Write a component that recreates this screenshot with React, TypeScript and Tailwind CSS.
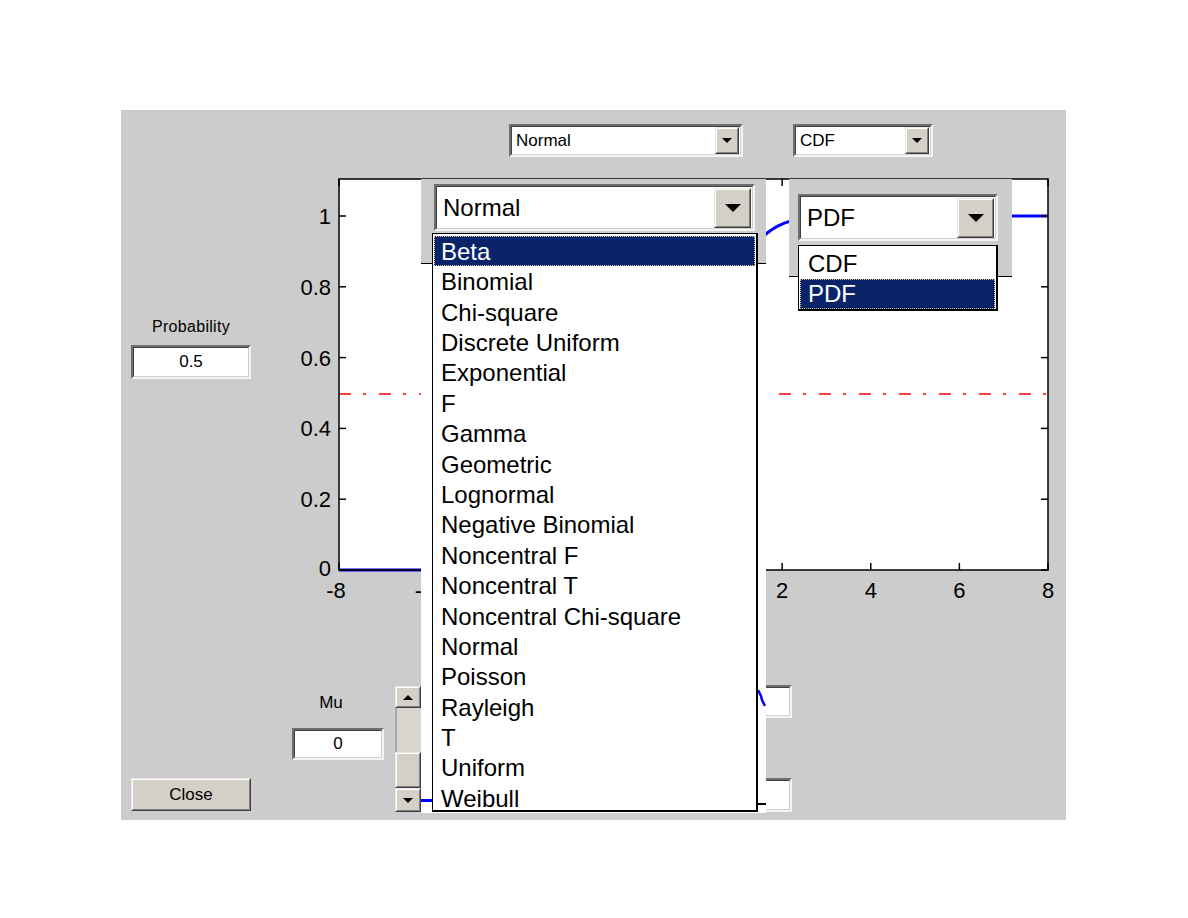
import React from "react";

const FONT = "font-['Liberation_Sans',Arial,sans-serif]";

const DISTRIBUTIONS = [
  "Beta",
  "Binomial",
  "Chi-square",
  "Discrete Uniform",
  "Exponential",
  "F",
  "Gamma",
  "Geometric",
  "Lognormal",
  "Negative Binomial",
  "Noncentral F",
  "Noncentral T",
  "Noncentral Chi-square",
  "Normal",
  "Poisson",
  "Rayleigh",
  "T",
  "Uniform",
  "Weibull",
];

// plot geometry, in page pixels
const AX = { left: 339, right: 1048, top: 179, bottom: 570 };
const xPx = (v: number) => AX.left + ((v + 8) / 16) * (AX.right - AX.left);
const yPx = (v: number) => AX.bottom - v * 354;

const erf = (x: number) => {
  const s = x < 0 ? -1 : 1;
  const a = Math.abs(x);
  const t = 1 / (1 + 0.3275911 * a);
  const y =
    1 -
    ((((1.061405429 * t - 1.453152027) * t + 1.421413741) * t - 0.284496736) * t + 0.254829592) *
      t *
      Math.exp(-a * a);
  return s * y;
};
const normCdf = (x: number) => 0.5 * (1 + erf(x / Math.SQRT2));

const Raised: React.FC<{ className?: string; children?: React.ReactNode }> = ({ className = "", children }) => (
  <div className={`border border-t-[#e8e6e0] border-l-[#e8e6e0] border-b-[#404040] border-r-[#404040] bg-[#d4d0c8] ${className}`}>
    <div className="flex h-full w-full items-center justify-center border border-t-white border-l-white border-b-[#808080] border-r-[#808080]">
      {children}
    </div>
  </div>
);

const Sunken: React.FC<{ className?: string; children?: React.ReactNode }> = ({ className = "", children }) => (
  <div className={`border-2 border-t-[#6e6e6e] border-l-[#6e6e6e] border-b-[#f4f4f4] border-r-[#f4f4f4] ${className}`}>
    <div className="flex h-full w-full items-center border border-t-[#404040] border-l-[#404040] border-b-[#d4d0c8] border-r-[#d4d0c8] bg-white">
      {children}
    </div>
  </div>
);

const SmallTriangle = () => (
  <div className="h-0 w-0 border-l-[5px] border-r-[5px] border-t-[5px] border-l-transparent border-r-transparent border-t-black" />
);

const SmallTriangleUp = () => (
  <div className="h-0 w-0 border-l-[5px] border-r-[5px] border-b-[5px] border-l-transparent border-r-transparent border-b-black" />
);

const BigTriangle = () => (
  <div className="h-0 w-0 border-l-[8px] border-r-[8px] border-t-[8px] border-l-transparent border-r-transparent border-t-black" />
);

const Combo: React.FC<{ label: string; className: string; big?: boolean }> = ({ label, className, big }) => (
  <Sunken className={className}>
    <span className={`flex-1 ${big ? "pl-[6px] text-[24px]" : "pl-[4px] text-[17px]"} text-black`}>{label}</span>
    <Raised className={big ? "mr-[1px] h-[40px] w-[37px]" : "mr-[1px] h-[27px] w-[24px]"}>
      {big ? <BigTriangle /> : <SmallTriangle />}
    </Raised>
  </Sunken>
);

const EditBox: React.FC<{ value?: string; className: string }> = ({ value, className }) => (
  <Sunken className={className}>
    <span className="flex-1 text-center text-[17px] text-black">{value}</span>
  </Sunken>
);

const PlotArea = () => {
  const curve: string[] = [];
  for (let i = 0; i <= 320; i++) {
    const v = -8 + (i / 320) * 16;
    curve.push(`${xPx(v).toFixed(1)},${yPx(normCdf(v)).toFixed(1)}`);
  }
  const yTicks = [0, 0.2, 0.4, 0.6, 0.8, 1];
  const xTicks = [-8, -6, -4, -2, 0, 2, 4, 6, 8];
  // labels -4, -2 and 0 sit fully under the enlarged list, so they are not drawn
  const xLabels = [-8, -6, 2, 4, 6, 8];
  return (
    <svg width={785} height={440} viewBox="281 170 785 440" className="block">
      <rect x={AX.left} y={AX.top} width={AX.right - AX.left} height={AX.bottom - AX.top} fill="#ffffff" />
      <line x1={AX.left} y1={394} x2={AX.right} y2={394} stroke="#ff0000" strokeWidth={1.6} strokeDasharray="12 12 3 13" />
      <polyline points={curve.join(" ")} fill="none" stroke="#0000ff" strokeWidth={3} />
      <rect
        x={AX.left}
        y={AX.top}
        width={AX.right - AX.left}
        height={AX.bottom - AX.top}
        fill="none"
        stroke="#000000"
        strokeWidth={1.5}
      />
      {yTicks.map((v) => (
        <g key={v}>
          <line x1={AX.left} y1={yPx(v)} x2={AX.left + 7} y2={yPx(v)} stroke="#000" strokeWidth={1.5} />
          <line x1={AX.right - 7} y1={yPx(v)} x2={AX.right} y2={yPx(v)} stroke="#000" strokeWidth={1.5} />
          <text
            x={331}
            y={yPx(v) + (v === 0 ? 6 : 8)}
            textAnchor="end"
            fontFamily="Liberation Sans, Arial, sans-serif"
            fontSize={22}
            fill="#000"
          >
            {v.toString()}
          </text>
        </g>
      ))}
      {xTicks.map((v) => (
        <g key={v}>
          <line x1={xPx(v)} y1={AX.bottom} x2={xPx(v)} y2={AX.bottom - 7} stroke="#000" strokeWidth={1.5} />
          <line x1={xPx(v)} y1={AX.top} x2={xPx(v)} y2={AX.top + 7} stroke="#000" strokeWidth={1.5} />
        </g>
      ))}
      {xLabels.map((v) => (
        <text
          key={v}
          x={xPx(v) - (v < 0 ? 3 : 0)}
          y={598}
          textAnchor="middle"
          fontFamily="Liberation Sans, Arial, sans-serif"
          fontSize={22}
          fill="#000"
        >
          {v}
        </text>
      ))}
    </svg>
  );
};

const Slider = () => (
  <div className="ml-[11px] mt-[76px] flex h-[126px] w-[26px] flex-col">
    <Raised className="h-[22px] w-full">
      <SmallTriangleUp />
    </Raised>
    <div className="h-[44px] w-full border-l-2 border-l-[#a8a8a8] bg-[#d8d5cf]" />
    <Raised className="h-[36px] w-full" />
    <Raised className="h-[24px] w-full">
      <SmallTriangle />
    </Raised>
  </div>
);

const DistributionList = () => (
  <div className="absolute left-[11px] top-[54px] h-[579px] w-[326px] border border-black border-r-2 border-b-2 bg-white px-[1px] pt-[2px]">
    {DISTRIBUTIONS.map((name, i) =>
      i === 0 ? (
        <div
          key={name}
          className="flex h-[30px] items-center border border-dotted border-[#d8c890] bg-[#0a246a] pl-[6px] pt-[2px] text-[24px] text-white"
        >
          {name}
        </div>
      ) : (
        <div key={name} className="flex h-[30.4px] items-center pl-[7px] pt-[2px] text-[24px] text-black">
          {name}
        </div>
      )
    )}
  </div>
);

const TypeList = () => (
  <div className="absolute left-[9px] top-[66px] h-[66px] w-[200px] border border-black border-r-2 border-b-2 bg-white px-[1px] pt-[2px]">
    <div className="flex h-[31px] items-center pl-[8px] text-[24px] text-black">CDF</div>
    <div className="flex h-[30px] items-center border border-dotted border-[#d8c890] bg-[#0a246a] pl-[7px] text-[24px] text-white">
      PDF
    </div>
  </div>
);

export default function App() {
  return (
    <div className={`h-[918px] w-[1188px] bg-white pl-[121px] pt-[110px] ${FONT}`}>
      <div className="relative flex h-[710px] w-[945px] flex-col overflow-hidden bg-[#cccccc]">
        {/* top selectors */}
        <div className="flex h-[60px] gap-[50px] pl-[388px] pt-[14px]">
          <Combo label="Normal" className="h-[33px] w-[234px]" />
          <Combo label="CDF" className="h-[33px] w-[140px]" />
        </div>

        {/* probability + plot */}
        <div className="flex h-[440px]">
          <div className="w-[160px] pl-[10px] pt-[147px]">
            <div className="w-[120px] text-center text-[16px] leading-[20px] tracking-[0.3px] text-black">Probability</div>
            <EditBox value="0.5" className="mt-[8px] h-[34px] w-[120px]" />
          </div>
          <PlotArea />
        </div>

        {/* bottom controls */}
        <div className="flex h-[210px] items-start pl-[10px]">
          <Raised className="mt-[168px] h-[33px] w-[120px]">
            <span className="text-[17px] text-black">Close</span>
          </Raised>
          <div className="ml-[41px] mt-[83px] flex w-[92px] flex-col">
            <div className="h-[20px] pr-[14px] text-center text-[17px] leading-[20px] text-black">Mu</div>
            <EditBox value="0" className="mt-[15px] h-[32px] w-[92px]" />
          </div>
          <Slider />
          <div className="ml-[279px] flex flex-col">
            <EditBox className="mt-[75px] h-[33px] w-[92px]" />
            <EditBox className="mt-[60px] h-[34px] w-[92px]" />
          </div>
        </div>

        {/* enlarged distribution dropdown */}
        <div className="absolute left-[300px] top-[69px] flex h-[634px] w-[345px] flex-col">
          <div className="h-[85px] border-b border-black bg-[#cccccc] pl-[13px] pt-[5px]">
            <Combo label="Normal" big className="h-[47px] w-[321px]" />
          </div>
          <div className="relative flex-1 bg-white">
            <div className="absolute left-0 top-[535px] h-[3px] w-[11px] bg-[#0000ff]" />
            <div className="absolute right-0 top-[539px] h-[2px] w-[8px] bg-black" />
            <svg className="absolute right-0 top-[424px]" width={8} height={20} viewBox="0 0 8 20">
              <polyline points="0,2 3,8 4,12 7,18" fill="none" stroke="#0000ff" strokeWidth={2.5} />
            </svg>
          </div>
          <DistributionList />
        </div>

        {/* enlarged function-type dropdown */}
        <div className="absolute left-[668px] top-[69px] h-[98px] w-[223px] border-b border-black bg-[#cccccc] pl-[9px] pt-[15px]">
          <Combo label="PDF" big className="h-[47px] w-[200px]" />
          <TypeList />
        </div>
      </div>
    </div>
  );
}
